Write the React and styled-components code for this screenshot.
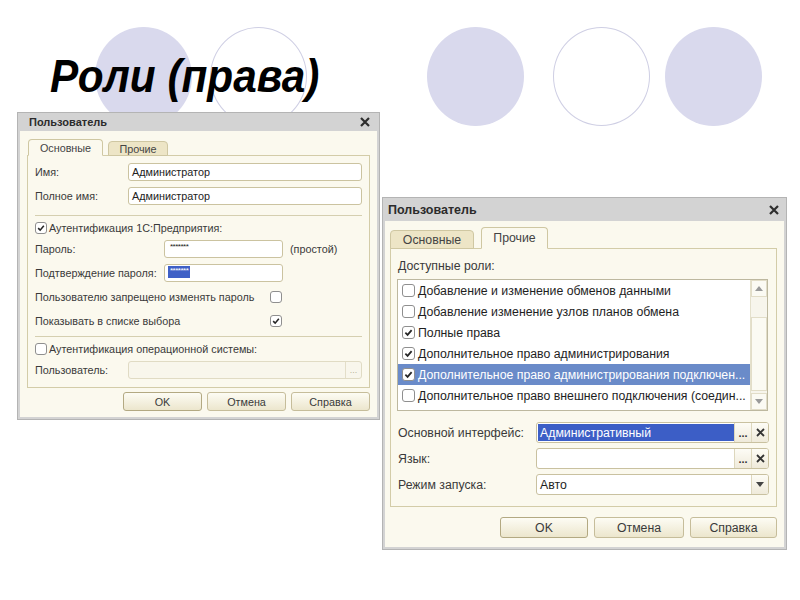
import React from 'react';
import styled, { createGlobalStyle, ThemeProvider } from 'styled-components';

const GlobalStyle = createGlobalStyle`
  html, body { margin: 0; padding: 0; background: #fff; }
  body { font-family: "Liberation Sans", Arial, sans-serif; }
  * { box-sizing: border-box; }
`;

// two dialogs of the same kind, drawn at slightly different scales
const small = {
  fs: 10.8, titleH: 18, titleFs: 11, titlePad: '0 7px 0 9px',
  bodyPad: '8px 7px 6px 7px', tabRow: 17, tabLow: 15, tabGap: 5, tabIndent: 1,
  panelPad: '7px 7px 8px 7px', rowGap: 6, fieldH: 18, check: 12,
  btnH: 19, btnGap: 5, btnTop: 4,
};
const large = {
  fs: 12.3, titleH: 23, titleFs: 12.5, titlePad: '0 5px 0 3px',
  bodyPad: '6px 7px 9px 5px', tabRow: 22, tabLow: 19, tabGap: 7, tabIndent: 0,
  panelPad: '10px 7px 10px 7px', rowGap: 5, fieldH: 21, check: 13,
  btnH: 21, btnGap: 6, btnTop: 10,
};

const Slide = styled.div`
  position: relative;
  width: 800px;
  height: 600px;
  overflow: hidden;
  background: #fff;
  display: flex;
  flex-direction: column;
`;

const Decor = styled.div`
  position: absolute;
  top: 27px;
  left: 0;
  display: flex;
  align-items: flex-start;
`;

const Circle = styled.div`
  width: 97px;
  height: 99px;
  border-radius: 50%;
  margin-left: ${p => p.$gap}px;
  background: ${p => (p.$filled ? '#d9d9ed' : '#fff')};
  border: ${p => (p.$filled ? 'none' : '1.5px solid #cfcfe4')};
`;

const Header = styled.header`
  position: relative;
  height: 112px;
  padding: 52px 0 0 50px;
`;

const Title = styled.h1`
  margin: 0;
  font: italic bold 47px/1 "Liberation Sans", Arial, sans-serif;
  color: #000;
  transform: scaleX(0.9);
  transform-origin: left center;
`;

const Stage = styled.main`
  position: relative;
  display: flex;
  align-items: flex-start;
  gap: 2px;
  padding-left: 17px;
`;

const Dialog = styled.section`
  width: ${p => p.$w}px;
  height: ${p => p.$h}px;
  margin-top: ${p => p.$top || 0}px;
  display: flex;
  flex-direction: column;
  background: #d3d3d3;
  border: 1px solid #b4b4b4;
  padding: 0 2px 2px;
  font-family: "Liberation Sans", Arial, sans-serif;
  font-size: ${p => p.theme.fs}px;
  color: #3a3a3a;
`;

const TitleBar = styled.div`
  height: ${p => p.theme.titleH}px;
  flex: none;
  display: flex;
  align-items: center;
  justify-content: space-between;
  padding: ${p => p.theme.titlePad};
  font-weight: bold;
  font-size: ${p => p.theme.titleFs}px;
  color: #2b2b2b;
`;

const Body = styled.div`
  flex: 1;
  display: flex;
  flex-direction: column;
  background: #fbf9ee;
  padding: ${p => p.theme.bodyPad};
`;

const Tabs = styled.div`
  position: relative;
  z-index: 1;
  display: flex;
  align-items: flex-end;
  gap: ${p => p.theme.tabGap}px;
  height: ${p => p.theme.tabRow}px;
  margin: 0 0 -1px ${p => p.theme.tabIndent}px;
  flex: none;
`;

const Tab = styled.div`
  width: ${p => p.$w}px;
  height: ${p => (p.$active ? p.theme.tabRow : p.theme.tabLow)}px;
  display: flex;
  align-items: center;
  justify-content: center;
  border: 1px solid #cfc7a2;
  border-bottom-color: ${p => (p.$active ? '#fbf9ee' : '#cfc7a2')};
  border-radius: 4px 4px 0 0;
  background: ${p => (p.$active ? '#fbf9ee' : '#ede5c6')};
  color: #444;
`;

const Panel = styled.div`
  flex: 1;
  display: flex;
  flex-direction: column;
  gap: ${p => p.theme.rowGap}px;
  border: 1px solid #d3cca8;
  padding: ${p => p.theme.panelPad};
`;

const Row = styled.div`
  display: flex;
  align-items: center;
  min-height: ${p => p.theme.fieldH}px;
  flex: none;
`;

const CheckRow = styled(Row)`
  min-height: ${p => p.theme.check}px;
  gap: 2px;
`;

const Label = styled.span`
  width: ${p => p.$w}px;
  flex: none;
  white-space: nowrap;
`;

const Note = styled.span`
  margin-left: 7px;
`;

const Separator = styled.div`
  height: 1px;
  flex: none;
  background: #d5cfb0;
  margin-top: ${p => p.$top || 0}px;
`;

const Input = styled.div`
  ${p => (p.$w ? `width: ${p.$w}px; flex: none;` : 'flex: 1;')}
  height: ${p => p.theme.fieldH}px;
  display: flex;
  align-items: center;
  border: 1px solid ${p => (p.$disabled ? '#e0dbc4' : '#cbc3a0')};
  border-radius: 3px;
  background: ${p => (p.$disabled ? '#f8f6ec' : '#fff')};
  padding-left: ${p => (p.$disabled ? 0 : 3)}px;
  color: #222;
  overflow: hidden;
`;

const Mask = styled.span`
  align-self: flex-start;
  margin-top: 1px;
  padding: 0 2px 3px;
  font-size: 8px;
  line-height: 9px;
  letter-spacing: -0.5px;
  background: ${p => (p.$selected ? '#3f60c6' : 'transparent')};
  color: ${p => (p.$selected ? '#fff' : '#222')};
`;

const Dots = styled.span`
  margin-left: auto;
  width: 16px;
  height: 100%;
  display: flex;
  align-items: flex-end;
  justify-content: center;
  border-left: 1px solid #e3dec9;
  color: #b8b39c;
  font-size: 9px;
  padding-bottom: 3px;
`;

const Box = styled.span`
  width: ${p => p.theme.check}px;
  height: ${p => p.theme.check}px;
  flex: none;
  display: inline-flex;
  border: 1px solid #8f8f8f;
  border-radius: 3px;
  background: #fff;
`;

const Buttons = styled.div`
  display: flex;
  justify-content: flex-end;
  gap: ${p => p.theme.btnGap}px;
  margin-top: ${p => p.theme.btnTop}px;
  flex: none;
`;

const Button = styled.button`
  width: ${p => p.$w}px;
  height: ${p => p.theme.btnH}px;
  padding: 0;
  border: 1px solid ${p => (p.$default ? '#b3a982' : '#c6bd9a')};
  border-radius: 3px;
  background: linear-gradient(#fdfcf4, #ece6cd);
  font: inherit;
  color: #3a3a3a;
`;

const Caption = styled.div`
  flex: none;
  line-height: 14px;
  margin-bottom: 1px;
`;

const ListBox = styled.div`
  height: 132px;
  flex: none;
  display: flex;
  margin: 0 1px 6px -1px;
  border: 1px solid #bdb89f;
  background: #fff;
  overflow: hidden;
`;

const ListRows = styled.div`
  flex: 1;
  min-width: 0;
  display: flex;
  flex-direction: column;
`;

const ListRow = styled.div`
  height: 21px;
  flex: none;
  display: flex;
  align-items: center;
  gap: 3px;
  padding-left: 4px;
  white-space: nowrap;
  overflow: hidden;
  background: ${p => (p.$selected ? '#6a8bc9' : 'transparent')};
  color: ${p => (p.$selected ? '#fff' : '#1e1e1e')};
`;

const ScrollBar = styled.div`
  width: 17px;
  flex: none;
  display: flex;
  flex-direction: column;
  border-left: 1px solid #e4e0cc;
  background: #f7f5ec;
`;

const ScrollBtn = styled.div`
  height: 17px;
  flex: none;
  display: flex;
  align-items: center;
  justify-content: center;
  border: 1px solid #e2ddc8;
  background: #fbfaf3;
`;

const Thumb = styled.div`
  flex: 1;
  margin: 20px 0 2px;
  border: 1px solid #e2ddc8;
  background: #fbfaf3;
`;

const Field = styled.div`
  flex: 1;
  height: ${p => p.theme.fieldH}px;
  display: flex;
  border: 1px solid #c9c1a0;
  border-radius: 3px;
  background: #fff;
  overflow: hidden;
`;

const Value = styled.div`
  flex: 1;
  display: flex;
  align-items: center;
  padding-left: 2px;
  margin: 1px 0 1px 1px;
  background: ${p => (p.$selected ? '#3c5ec6' : 'transparent')};
  color: ${p => (p.$selected ? '#fff' : '#1e1e1e')};
`;

const FieldBtn = styled.div`
  width: 17px;
  flex: none;
  display: flex;
  align-items: center;
  justify-content: center;
  border-left: 1px solid #ddd7bd;
  background: linear-gradient(#fdfcf6, #efeada);
  color: #333;
  font-weight: bold;
  font-size: 11px;
`;

const Close = () => (
  <svg width="10" height="10" viewBox="0 0 10 10">
    <path d="M1 1L9 9M9 1L1 9" stroke="#2e2e2e" strokeWidth="2.2" />
  </svg>
);

const Cross = () => (
  <svg width="9" height="9" viewBox="0 0 9 9">
    <path d="M1 1L8 8M8 1L1 8" stroke="#333" strokeWidth="1.8" />
  </svg>
);

const Arrow = ({ dir = 'down', color = '#444' }) => (
  <svg width="8" height="5" viewBox="0 0 8 5">
    <path d={dir === 'up' ? 'M0 5L4 0L8 5Z' : 'M0 0L8 0L4 5Z'} fill={color} />
  </svg>
);

const CheckBox = ({ checked }) => (
  <Box>
    {checked && (
      <svg viewBox="0 0 12 12" width="100%" height="100%">
        <path d="M2.6 6.2L5 8.6L9.4 3.4" fill="none" stroke="#262626" strokeWidth="1.9" />
      </svg>
    )}
  </Box>
);

const roles = [
  { text: 'Добавление и изменение обменов данными' },
  { text: 'Добавление изменение узлов планов обмена' },
  { text: 'Полные права', on: true },
  { text: 'Дополнительное право администрирования', on: true },
  { text: 'Дополнительное право администрирования подключен...', on: true, sel: true },
  { text: 'Дополнительное право внешнего подключения (соедин...' },
  { text: 'Дополнительное право интерактивного открытия внешних...' },
];

const MainDialog = () => (
  <ThemeProvider theme={small}>
    <Dialog $w={363} $h={308}>
      <TitleBar>
        Пользователь
        <Close />
      </TitleBar>
      <Body>
        <Tabs>
          <Tab $active $w={75}>Основные</Tab>
          <Tab $w={60}>Прочие</Tab>
        </Tabs>
        <Panel>
          <Row>
            <Label $w={93}>Имя:</Label>
            <Input>Администратор</Input>
          </Row>
          <Row>
            <Label $w={93}>Полное имя:</Label>
            <Input>Администратор</Input>
          </Row>
          <Separator $top={4} />
          <CheckRow>
            <CheckBox checked />
            Аутентификация 1С:Предприятия:
          </CheckRow>
          <Row>
            <Label $w={129}>Пароль:</Label>
            <Input $w={119}><Mask>*******</Mask></Input>
            <Note>(простой)</Note>
          </Row>
          <Row>
            <Label $w={129}>Подтверждение пароля:</Label>
            <Input $w={119}><Mask $selected>*******</Mask></Input>
          </Row>
          <Row>
            <Label $w={235}>Пользователю запрещено изменять пароль</Label>
            <CheckBox />
          </Row>
          <Row>
            <Label $w={235}>Показывать в списке выбора</Label>
            <CheckBox checked />
          </Row>
          <Separator />
          <CheckRow>
            <CheckBox />
            Аутентификация операционной системы:
          </CheckRow>
          <Row>
            <Label $w={93}>Пользователь:</Label>
            <Input $disabled><Dots>...</Dots></Input>
          </Row>
        </Panel>
        <Buttons>
          <Button $default $w={79}>OK</Button>
          <Button $w={79}>Отмена</Button>
          <Button $w={79}>Справка</Button>
        </Buttons>
      </Body>
    </Dialog>
  </ThemeProvider>
);

const RolesDialog = () => (
  <ThemeProvider theme={large}>
    <Dialog $w={405} $h={353} $top={85}>
      <TitleBar>
        Пользователь
        <Close />
      </TitleBar>
      <Body>
        <Tabs>
          <Tab $w={84}>Основные</Tab>
          <Tab $active $w={67}>Прочие</Tab>
        </Tabs>
        <Panel>
          <Caption>Доступные роли:</Caption>
          <ListBox>
            <ListRows>
              {roles.map(r => (
                <ListRow key={r.text} $selected={r.sel}>
                  <CheckBox checked={r.on} />
                  {r.text}
                </ListRow>
              ))}
            </ListRows>
            <ScrollBar>
              <ScrollBtn><Arrow dir="up" color="#9a9a9a" /></ScrollBtn>
              <Thumb />
              <ScrollBtn><Arrow color="#9a9a9a" /></ScrollBtn>
            </ScrollBar>
          </ListBox>
          <Row>
            <Label $w={138}>Основной интерфейс:</Label>
            <Field>
              <Value $selected>Административный</Value>
              <FieldBtn>...</FieldBtn>
              <FieldBtn><Cross /></FieldBtn>
            </Field>
          </Row>
          <Row>
            <Label $w={138}>Язык:</Label>
            <Field>
              <Value />
              <FieldBtn>...</FieldBtn>
              <FieldBtn><Cross /></FieldBtn>
            </Field>
          </Row>
          <Row>
            <Label $w={138}>Режим запуска:</Label>
            <Field>
              <Value>Авто</Value>
              <FieldBtn><Arrow /></FieldBtn>
            </Field>
          </Row>
        </Panel>
        <Buttons>
          <Button $default $w={88}>OK</Button>
          <Button $w={90}>Отмена</Button>
          <Button $w={87}>Справка</Button>
        </Buttons>
      </Body>
    </Dialog>
  </ThemeProvider>
);

export default function App() {
  return (
    <>
      <GlobalStyle />
      <Slide>
        <Decor>
          <Circle $filled $gap={95} />
          <Circle $gap={18} />
          <Circle $filled $gap={120} />
          <Circle $gap={29} />
          <Circle $filled $gap={15} />
        </Decor>
        <Header>
          <Title>Роли (права)</Title>
        </Header>
        <Stage>
          <MainDialog />
          <RolesDialog />
        </Stage>
      </Slide>
    </>
  );
}
